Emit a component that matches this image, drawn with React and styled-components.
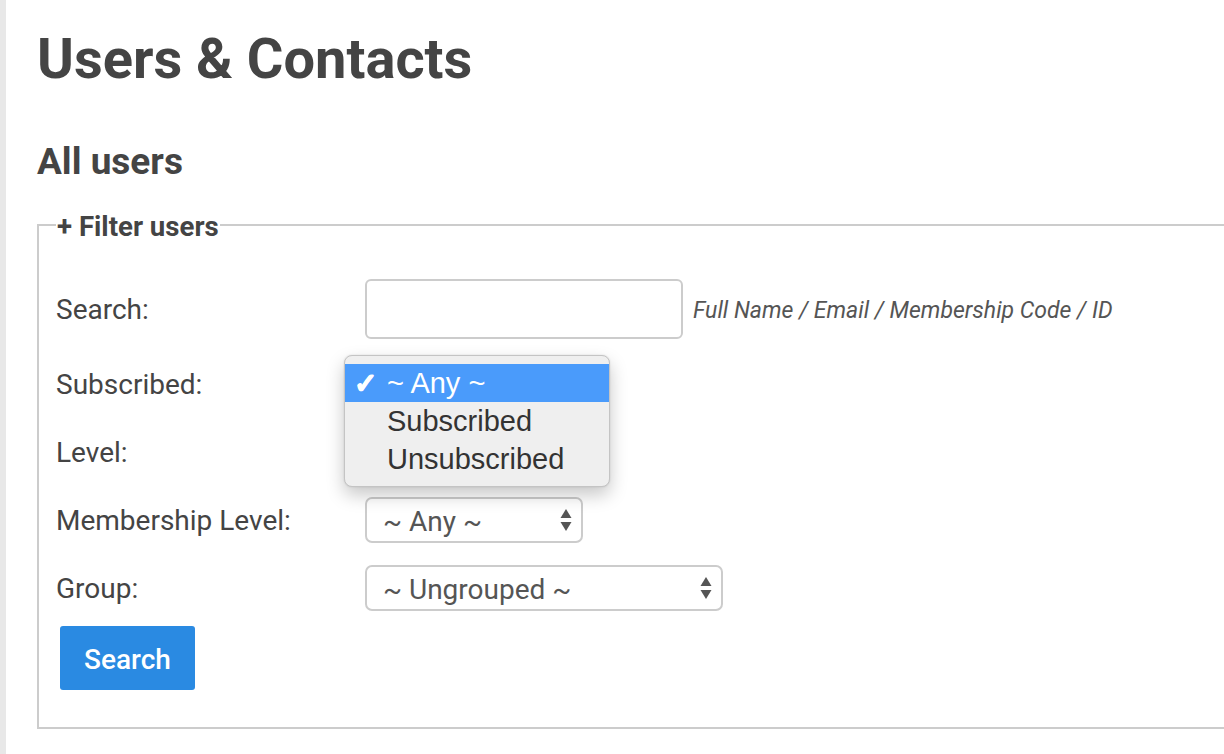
import React from "react";
import styled, { createGlobalStyle } from "styled-components";

const GlobalStyle = createGlobalStyle`
  html, body {
    margin: 0;
    padding: 0;
    background: #ffffff;
    overflow: hidden;
  }
  body {
    font-family: Roboto, "Noto Sans", sans-serif;
    color: #444444;
  }
`;

const rows = [
  { label: "Membership Level:", value: "~ Any ~", width: 218 },
  { label: "Group:", value: "~ Ungrouped ~", width: 358 },
];

const subscribedOptions = ["~ Any ~", "Subscribed", "Unsubscribed"];

const Arrows = () => (
  <ArrowIcon width="12" height="24" viewBox="0 0 12 24">
    <path d="M6 1 L11.5 10 L0.5 10 Z" fill="#555555" />
    <path d="M0.5 14 L11.5 14 L6 23 Z" fill="#555555" />
  </ArrowIcon>
);

const Select = ({ value, width }) => (
  <SelectWrap style={{ width }}>
    <SelectBox defaultValue={value}>
      <option>{value}</option>
    </SelectBox>
    <Arrows />
  </SelectWrap>
);

const App = () => {
  return (
    <>
      <GlobalStyle />
      <Page>
        <Strip />
        <Content>
          <Title>Users &amp; Contacts</Title>
          <SubTitle>All users</SubTitle>
          <Fieldset>
            <Legend>+ Filter users</Legend>
            <Form>
              <Row>
                <Label>Search:</Label>
                <SearchInput type="text" />
                <Hint>Full Name / Email / Membership Code / ID</Hint>
              </Row>
              <Row>
                <Label>Subscribed:</Label>
                <Anchor>
                  <Select value="~ Any ~" width={218} />
                  <Popup>
                    {subscribedOptions.map((opt, i) => (
                      <PopupItem key={opt} active={i === 0}>
                        <Check>{i === 0 ? "✓" : ""}</Check>
                        {opt}
                      </PopupItem>
                    ))}
                  </Popup>
                </Anchor>
              </Row>
              <Row>
                <Label>Level:</Label>
                <Select value="~ Any ~" width={218} />
              </Row>
              {rows.map((r) => (
                <Row key={r.label}>
                  <Label>{r.label}</Label>
                  <Select value={r.value} width={r.width} />
                </Row>
              ))}
              <ButtonRow>
                <SearchButton>Search</SearchButton>
              </ButtonRow>
            </Form>
          </Fieldset>
        </Content>
      </Page>
    </>
  );
};

const Page = styled.div`
  display: flex;
  min-height: 754px;
  width: 1224px;
  overflow: hidden;
`;

const Strip = styled.div`
  width: 6px;
  flex-shrink: 0;
  background: #e8e8e8;
`;

const Content = styled.div`
  flex: 1;
  padding: 28px 0 0 31px;
  min-width: 0;
`;

const Title = styled.h1`
  margin: 0;
  font-size: 56px;
  line-height: 62px;
  font-weight: 700;
  color: #444444;
`;

const SubTitle = styled.h2`
  margin: 52px 0 0 0;
  font-size: 37px;
  line-height: 40px;
  font-weight: 700;
  color: #444444;
`;

const Fieldset = styled.fieldset`
  margin: 26px 0 0 0;
  width: 1240px;
  border: 2px solid #cccccc;
  padding: 37px 0 37px 17px;
  box-sizing: border-box;
`;

const Legend = styled.legend`
  padding: 4px 1px 0;
  font-size: 27.6px;
  line-height: 30px;
  font-weight: 700;
  color: #444444;
`;

const Form = styled.div`
  display: flex;
  flex-direction: column;
  gap: 22px;
`;

const Row = styled.div`
  display: flex;
  align-items: center;
`;

const Label = styled.label`
  width: 309px;
  flex-shrink: 0;
  font-size: 28px;
  line-height: 34px;
  padding-top: 2px;
  color: #444444;
`;

const SearchInput = styled.input`
  width: 318px;
  height: 60px;
  box-sizing: border-box;
  border: 2px solid #cccccc;
  border-radius: 6px;
  background: #ffffff;
  font-family: Roboto, sans-serif;
  font-size: 28px;
  padding: 0 16px;
  outline: none;
`;

const Hint = styled.span`
  margin-left: 10px;
  padding-top: 3px;
  font-size: 23px;
  font-style: italic;
  color: #555555;
`;

const Anchor = styled.div`
  position: relative;
`;

const SelectWrap = styled.div`
  position: relative;
  height: 46px;
`;

const SelectBox = styled.select`
  appearance: none;
  -webkit-appearance: none;
  width: 100%;
  height: 46px;
  box-sizing: border-box;
  border: 2px solid #cccccc;
  border-radius: 7px;
  background: #ffffff;
  color: #555555;
  font-family: Roboto, sans-serif;
  font-size: 28px;
  padding: 2px 40px 0 16px;
  outline: none;
`;

const ArrowIcon = styled.svg`
  position: absolute;
  right: 11px;
  top: 11px;
  pointer-events: none;
`;

const Popup = styled.div`
  position: absolute;
  left: -21px;
  top: -6px;
  width: 266px;
  box-sizing: border-box;
  padding: 8px 0;
  background: #efefef;
  border: 1px solid #c4c4c4;
  border-radius: 8px;
  box-shadow: 0 8px 18px rgba(0, 0, 0, 0.22), 0 0 2px rgba(0, 0, 0, 0.12);
  z-index: 10;
`;

const PopupItem = styled.div`
  display: flex;
  align-items: center;
  height: 38px;
  padding-left: 9px;
  font-family: "Liberation Sans", Arial, sans-serif;
  font-size: 29px;
  color: ${(p) => (p.active ? "#ffffff" : "#333333")};
  background: ${(p) => (p.active ? "#4a9bfb" : "transparent")};
`;

const Check = styled.span`
  width: 33px;
  font-size: 28px;
  font-weight: 700;
  -webkit-text-stroke: 1px #ffffff;
`;

const ButtonRow = styled.div`
  display: flex;
  margin-top: -7px;
  padding-left: 4px;
`;

const SearchButton = styled.button`
  height: 64px;
  padding: 2px 24px 0;
  border: none;
  border-radius: 3px;
  background: #2a8ae2;
  color: #ffffff;
  font-family: Roboto, sans-serif;
  font-size: 28px;
  font-weight: 500;
  cursor: pointer;
`;

export default App;
